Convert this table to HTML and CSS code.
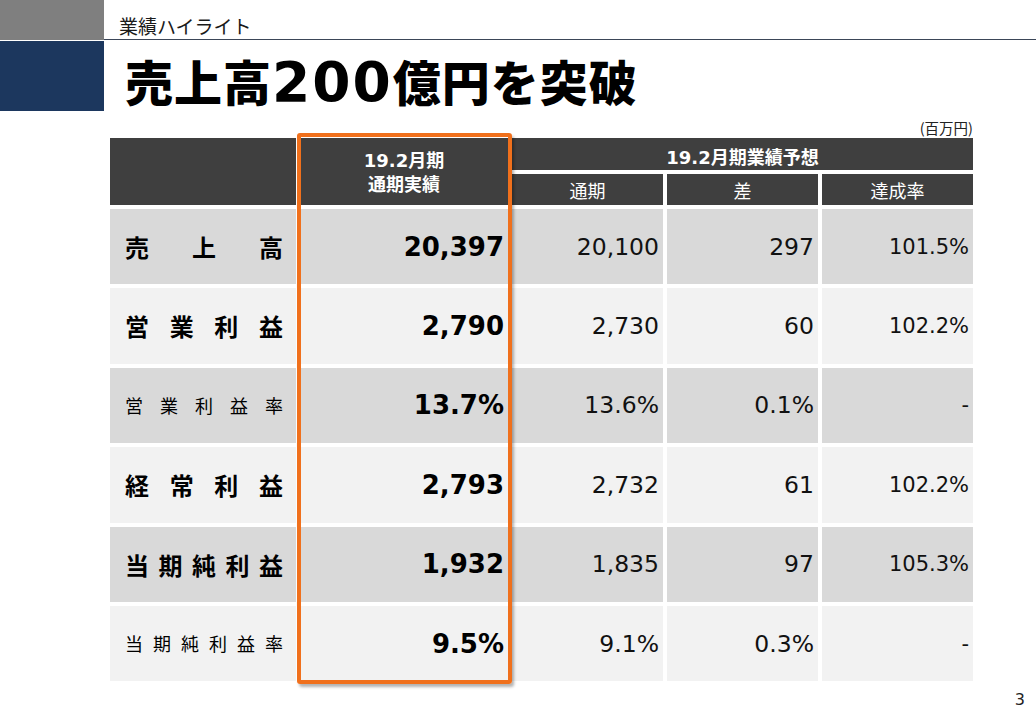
FILE: index.html
```html
<!DOCTYPE html>
<html lang="ja">
<head>
<meta charset="utf-8">
<title>業績ハイライト</title>
<link rel="stylesheet" href="styles.css">
</head>
<body>
<div class="slide">
  <header class="band">
    <div class="side">
      <div class="side-gray"></div>
      <div class="side-navy"></div>
    </div>
    <div class="heads">
      <div class="kicker">業績ハイライト</div>
      <h1 class="title">売上高<span class="num">200</span>億円を突破</h1>
    </div>
  </header>

  <main class="content">
    <div class="unit">(百万円)</div>
    <div class="tablewrap">
      <div class="grid">
        <div class="th th-blank"></div>
        <div class="th th-actual"><span>19.2月期</span><span>通期実績</span></div>
        <div class="th th-fc">19.2月期業績予想</div>
        <div class="th th-sub">通期</div>
        <div class="th th-sub">差</div>
        <div class="th th-sub">達成率</div>

        <div class="td lab lab-big row-a">売上高</div>
        <div class="td act row-a">20,397</div>
        <div class="td val row-a">20,100</div>
        <div class="td val row-a">297</div>
        <div class="td val rate row-a">101.5%</div>

        <div class="td lab lab-big row-b">営業利益</div>
        <div class="td act row-b">2,790</div>
        <div class="td val row-b">2,730</div>
        <div class="td val row-b">60</div>
        <div class="td val rate row-b">102.2%</div>

        <div class="td lab lab-small row-a">営業利益率</div>
        <div class="td act row-a">13.7%</div>
        <div class="td val row-a">13.6%</div>
        <div class="td val row-a">0.1%</div>
        <div class="td val rate row-a">-</div>

        <div class="td lab lab-big row-b">経常利益</div>
        <div class="td act row-b">2,793</div>
        <div class="td val row-b">2,732</div>
        <div class="td val row-b">61</div>
        <div class="td val rate row-b">102.2%</div>

        <div class="td lab lab-big row-a">当期純利益</div>
        <div class="td act row-a">1,932</div>
        <div class="td val row-a">1,835</div>
        <div class="td val row-a">97</div>
        <div class="td val rate row-a">105.3%</div>

        <div class="td lab lab-small row-b">当期純利益率</div>
        <div class="td act row-b">9.5%</div>
        <div class="td val row-b">9.1%</div>
        <div class="td val row-b">0.3%</div>
        <div class="td val rate row-b">-</div>
      </div>
      <div class="highlight"></div>
    </div>
  </main>

  <footer class="pageno">3</footer>
</div>
</body>
</html>
```

FILE: styles.css
```css
* { box-sizing: border-box; }

html, body {
  margin: 0;
  padding: 0;
  background: #ffffff;
}

body {
  font-family: "DejaVu Sans", "Noto Sans CJK JP", sans-serif;
  color: #111111;
}

.slide {
  width: 1036px;
  height: 717px;
  overflow: hidden;
}

/* ---------- top band ---------- */
.band {
  display: flex;
  height: 111px;
}

.side {
  width: 104px;
  flex: none;
  display: flex;
  flex-direction: column;
}

.side-gray {
  height: 40px;
  background: #7f7f7f;
}

.side-navy {
  margin-top: 1px;
  height: 70px;
  background: #1c375e;
}

.heads {
  flex: 1;
  display: flex;
  flex-direction: column;
}

.kicker {
  height: 40px;
  padding: 16px 0 0 15px;
  font-family: "Noto Sans CJK JP", sans-serif;
  font-size: 19px;
  line-height: 20px;
  color: #1a1a1a;
  border-bottom: 1.5px solid #3b4658;
}

.title {
  margin: 0;
  height: 71px;
  padding: 14px 0 0 21px;
  font-family: "Noto Sans CJK JP", sans-serif;
  font-weight: 900;
  font-size: 48px;
  line-height: 52px;
  letter-spacing: 1px;
  color: #000000;
  white-space: nowrap;
}

.title .num {
  font-family: "DejaVu Sans", sans-serif;
  font-weight: 700;
  font-size: 55px;
  line-height: 40px;
  letter-spacing: 2px;
}

/* ---------- table ---------- */
.content {
  padding: 0 63px 0 110px;
}

.unit {
  margin-top: 7px;
  height: 20px;
  text-align: right;
  font-family: "Noto Sans CJK JP", sans-serif;
  font-size: 14.5px;
  line-height: 20px;
  color: #222222;
}

.tablewrap {
  position: relative;
}

.grid {
  display: grid;
  grid-template-columns: 186px 208px 151px 151px 151px;
  grid-template-rows: 32px 31px repeat(6, 75.4px);
  column-gap: 4px;
  row-gap: 4px;
}

.th {
  background: #3f3f3f;
  color: #ffffff;
  display: flex;
  align-items: center;
  justify-content: center;
  font-size: 18px;
}

.th-blank {
  grid-column: 1;
  grid-row: 1 / span 2;
}

.th-actual {
  grid-column: 2;
  grid-row: 1 / span 2;
  flex-direction: column;
  font-weight: 700;
  line-height: 24px;
  padding-top: 2px;
}

.th-fc {
  grid-column: 3 / span 3;
  grid-row: 1;
  font-weight: 700;
  padding-top: 3px;
}

.th-sub {
  font-family: "Noto Sans CJK JP", sans-serif;
  font-weight: 400;
  font-size: 18px;
}

.td {
  display: flex;
  align-items: center;
}

.row-a { background: #d9d9d9; }
.row-b { background: #f2f2f2; }

.lab {
  display: block;
  padding: 0 13px 0 15px;
  font-family: "Noto Sans CJK JP", sans-serif;
  text-align: justify;
  text-align-last: justify;
  color: #000000;
  white-space: nowrap;
}

.lab-big {
  font-size: 24px;
  font-weight: 700;
  line-height: 75.4px;
}

.lab-small {
  font-size: 18px;
  font-weight: 400;
  line-height: 75.4px;
}

.act {
  justify-content: flex-end;
  padding-right: 4px;
  font-size: 26px;
  font-weight: 700;
  color: #000000;
}

.val {
  justify-content: flex-end;
  padding-right: 4px;
  font-size: 23.5px;
  font-weight: 400;
}

.rate {
  font-size: 21px;
}

.highlight {
  position: absolute;
  left: 187px;
  top: -5px;
  width: 215px;
  height: 551px;
  border: 4px solid #f0701c;
  border-radius: 3px;
  box-shadow: 2px 3px 3px rgba(0, 0, 0, 0.3);
  pointer-events: none;
}

/* ---------- footer ---------- */
.pageno {
  margin-top: 9px;
  padding-right: 11px;
  text-align: right;
  font-size: 16px;
  line-height: 20px;
  color: #222222;
}
```
